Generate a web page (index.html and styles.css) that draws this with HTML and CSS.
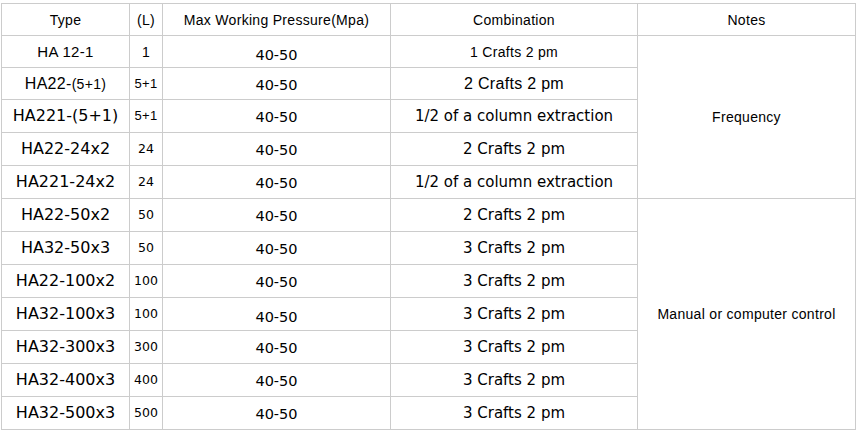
FILE: index.html
```html
<!DOCTYPE html>
<html>
<head>
<meta charset="utf-8">
<link rel="stylesheet" href="styles.css">
</head>
<body>
<table class="spec">
  <colgroup>
    <col class="c-type"><col class="c-l"><col class="c-p"><col class="c-comb"><col class="c-notes">
  </colgroup>
  <tr class="head">
    <td class="ar">Type</td>
    <td class="ar">(L)</td>
    <td class="ar">Max Working Pressure(Mpa)</td>
    <td class="ar">Combination</td>
    <td class="ar">Notes</td>
  </tr>
  <tr class="r32">
    <td class="ar a15">HA 12-1</td>
    <td class="ar">1</td>
    <td class="vd pr low">40-50</td>
    <td class="ar">1 Crafts 2 pm</td>
    <td class="ar" rowspan="5">Frequency</td>
  </tr>
  <tr class="r32">
    <td class="ar"><span class="a16">HA22-</span><span class="a14">(5+1)</span></td>
    <td class="ar a13">5+1</td>
    <td class="vd pr">40-50</td>
    <td class="ar a16">2 Crafts 2 pm</td>
  </tr>
  <tr>
    <td class="vd t">HA221-(5+1)</td>
    <td class="ar a13">5+1</td>
    <td class="vd pr">40-50</td>
    <td class="vd cb">1/2 of a column extraction</td>
  </tr>
  <tr>
    <td class="vd t">HA22-24x2</td>
    <td class="vd l">24</td>
    <td class="vd pr">40-50</td>
    <td class="vd cb">2 Crafts 2 pm</td>
  </tr>
  <tr>
    <td class="vd t">HA221-24x2</td>
    <td class="vd l">24</td>
    <td class="vd pr">40-50</td>
    <td class="vd cb">1/2 of a column extraction</td>
  </tr>
  <tr>
    <td class="vd t">HA22-50x2</td>
    <td class="vd l">50</td>
    <td class="vd pr">40-50</td>
    <td class="vd cb">2 Crafts 2 pm</td>
    <td class="ar" rowspan="7">Manual or computer control</td>
  </tr>
  <tr>
    <td class="vd t">HA32-50x3</td>
    <td class="vd l">50</td>
    <td class="vd pr">40-50</td>
    <td class="vd cb">3 Crafts 2 pm</td>
  </tr>
  <tr>
    <td class="vd t">HA22-100x2</td>
    <td class="vd l">100</td>
    <td class="vd pr">40-50</td>
    <td class="vd cb">3 Crafts 2 pm</td>
  </tr>
  <tr>
    <td class="vd t">HA32-100x3</td>
    <td class="vd l">100</td>
    <td class="vd pr low2">40-50</td>
    <td class="vd cb">3 Crafts 2 pm</td>
  </tr>
  <tr>
    <td class="vd t">HA32-300x3</td>
    <td class="vd l">300</td>
    <td class="vd pr">40-50</td>
    <td class="vd cb">3 Crafts 2 pm</td>
  </tr>
  <tr>
    <td class="vd t">HA32-400x3</td>
    <td class="vd l">400</td>
    <td class="vd pr">40-50</td>
    <td class="vd cb">3 Crafts 2 pm</td>
  </tr>
  <tr>
    <td class="vd t">HA32-500x3</td>
    <td class="vd l">500</td>
    <td class="vd pr">40-50</td>
    <td class="vd cb">3 Crafts 2 pm</td>
  </tr>
</table>
</body>
</html>
```
FILE: styles.css
```css
html, body {
  margin: 0;
  padding: 0;
  background: #fff;
}
body {
  padding: 3px 0 0 1px;
}
.spec {
  border-collapse: collapse;
  table-layout: fixed;
  width: 855px;
  color: #000;
}
.c-type { width: 128px; }
.c-l { width: 33px; }
.c-p { width: 228px; }
.c-comb { width: 247px; }
.c-notes { width: 218px; }

.spec td {
  border: 1px solid #cccccc;
  padding: 0;
  text-align: center;
  vertical-align: middle;
  white-space: nowrap;
  overflow: hidden;
  line-height: 18px;
}
.spec tr { height: 33px; }
.spec tr.head, .spec tr.r32 { height: 32px; }

.ar {
  font-family: "Liberation Sans", Arial, sans-serif;
  font-size: 14px;
  letter-spacing: 0.3px;
}
.a13 { font-size: 13px; }
.a14 { font-size: 14px; }
.a15 { font-size: 15px; }
.a16 { font-size: 16px; }

.vd {
  font-family: "DejaVu Sans", Verdana, sans-serif;
}
.vd.t { font-size: 16px; }
.vd.l { font-size: 12.5px; }
.vd.pr { font-size: 14.5px; padding-top: 2px; }
.vd.pr.low { padding-top: 7px; }
.vd.pr.low2 { padding-top: 5px; }
.vd.cb { font-size: 15px; }
```
